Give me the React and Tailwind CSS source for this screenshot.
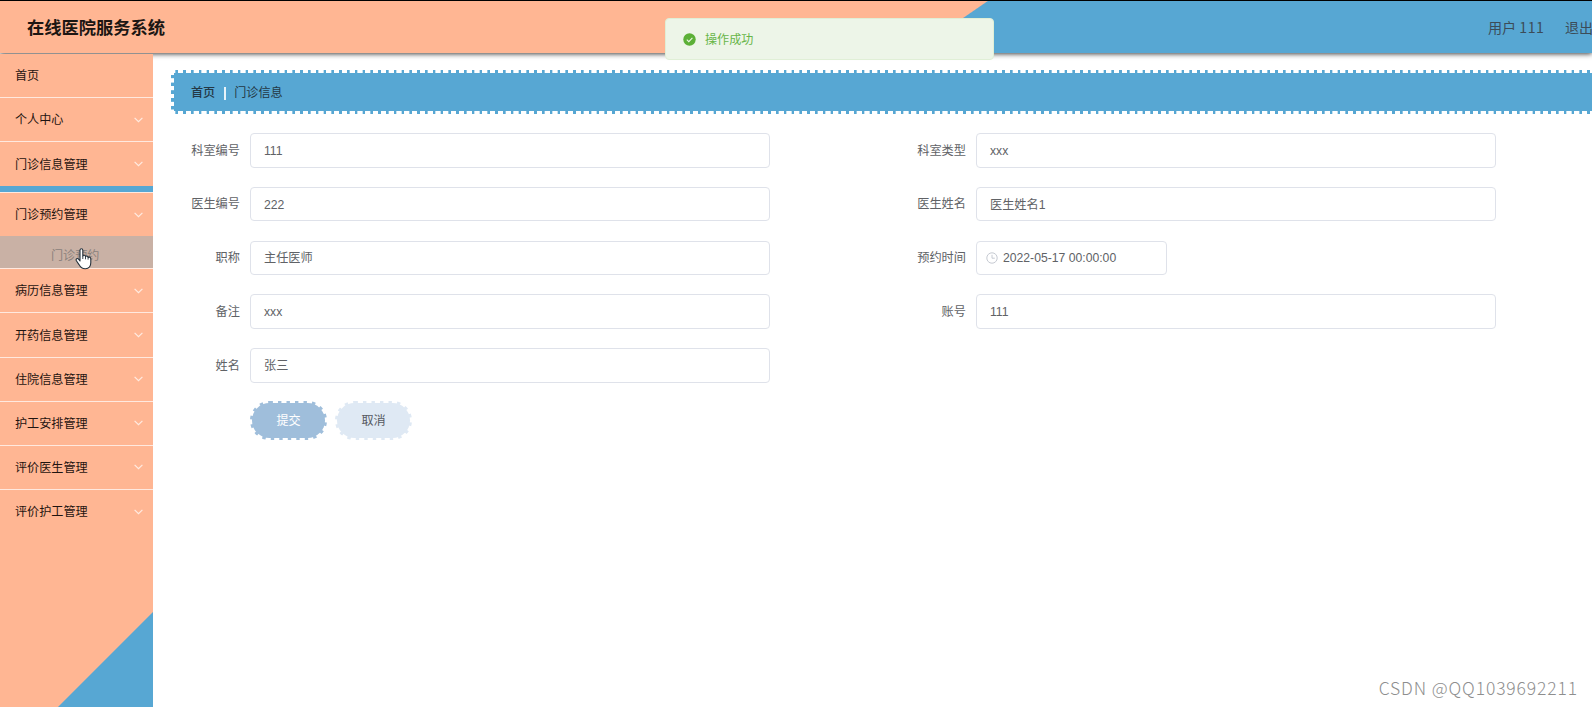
import { clsx } from 'clsx';

const menu = [
  { label: '首页' },
  { label: '个人中心', arrow: true },
  { label: '门诊信息管理', arrow: true, active: true },
  { label: '门诊预约管理', arrow: true, children: ['门诊预约'] },
  { label: '病历信息管理', arrow: true },
  { label: '开药信息管理', arrow: true },
  { label: '住院信息管理', arrow: true },
  { label: '护工安排管理', arrow: true },
  { label: '评价医生管理', arrow: true },
  { label: '评价护工管理', arrow: true },
];

const fields = [
  { label: '科室编号', value: '111' },
  { label: '科室类型', value: 'xxx' },
  { label: '医生编号', value: '222' },
  { label: '医生姓名', value: '医生姓名1' },
  { label: '职称', value: '主任医师' },
  { label: '预约时间', value: '2022-05-17 00:00:00', date: true },
  { label: '备注', value: 'xxx' },
  { label: '账号', value: '111' },
  { label: '姓名', value: '张三' },
];

function ArrowDown() {
  return (
    <svg className="w-[9px] h-[6px]" viewBox="0 0 9 6" fill="none" stroke="#ffebe1" strokeWidth="1.2">
      <path d="M0.6 0.8 4.5 4.7 8.4 0.8" />
    </svg>
  );
}

function Clock() {
  return (
    <svg className="w-[12px] h-[12px]" viewBox="0 0 12 12" fill="none" stroke="#c6cad2" strokeWidth="1">
      <circle cx="6" cy="6" r="5.2" />
      <path d="M6 2.8V6.2H8.8" />
    </svg>
  );
}

function HandCursor() {
  return (
    <svg className="absolute left-[75px] top-[12px] w-[17px] h-[22px]" viewBox="0 0 17 22" fill="#fff" stroke="#26323c" strokeWidth="1.1" strokeLinejoin="round">
      <path d="M5 13V2.2C5 .3 7.8.3 7.8 2.2V8C8.2 6.8 10.5 7 10.5 8.6 11.2 7.6 13.1 8 13.1 9.5 14 8.7 15.8 9.2 15.8 11V14.5C15.8 17 14.5 20.5 10.5 20.8 6.5 21 5 18.5 4 16.6L1.4 12.8C.4 11 2.4 9.8 3.6 11.2Z" />
      <path d="M7.8 8V11M10.5 8.6V11.3M13.1 9.5V11.6" strokeWidth="0.9" />
    </svg>
  );
}

function Header() {
  return (
    <header className="relative z-10 h-[53px] shrink-0 border-t border-black bg-[linear-gradient(145.5deg,#ffb693_559px,#57a7d3_560px)] shadow-[0_1px_5px_rgba(0,0,0,0.75)] flex items-center justify-between pl-[27px]">
      <h1 className="pt-[4px] text-[17.25px] font-bold text-[#1c1613] whitespace-nowrap">在线医院服务系统</h1>
      <div className="w-[104px] pt-px flex gap-[22px] text-[14.1px] text-[#3c4c58] whitespace-nowrap overflow-hidden font-['Noto_Sans_CJK_SC',sans-serif]">
        <span className="w-[55px] shrink-0">用户 <span className="tracking-[0.5px]">111</span></span>
        <span className="shrink-0">退出</span>
      </div>
      <div className="absolute left-[665px] top-[17px] w-[329px] h-[42px] rounded-[4px] border border-[#e0efd6] bg-[#edf5e8] flex items-center gap-[9px] pl-[17px]">
        <svg className="w-[13px] h-[13px]" viewBox="0 0 13 13">
          <circle cx="6.5" cy="6.5" r="6.2" fill="#5cb037" />
          <path d="M3.8 6.6 5.8 8.6 9.4 4.9" fill="none" stroke="#edf5e8" strokeWidth="1.1" />
        </svg>
        <span className="pt-[2px] text-[12.1px] text-[#68b648]">操作成功</span>
      </div>
    </header>
  );
}

function Sidebar() {
  return (
    <aside className="w-[153.4px] shrink-0 relative z-10 mt-px bg-[linear-gradient(315deg,#57a7d3_66.8px,#ffb693_67.6px)] text-[12.1px] text-[#1f1410]">
      {menu.map((item, i) => (
        <div
          key={item.label}
          className={clsx(i < menu.length - 1 && 'border-b border-[#ffe9df]')}
        >
          <div className="h-[43.2px] flex items-center justify-between pl-[15px] pr-[10px]">
            <span className="pt-[1.5px]">{item.label}</span>
            {item.arrow && <ArrowDown />}
          </div>
          {item.active && <div className="h-[6.4px] bg-[#57a7d3]" />}
          {item.children?.map((child) => (
            <div key={child} className="relative h-[32px] bg-[#c9b1a5] text-[#8b817c] flex items-center pt-[7px] pl-[51px]">
              {child}
              <HandCursor />
            </div>
          ))}
        </div>
      ))}
    </aside>
  );
}

function Breadcrumb() {
  return (
    <div className="flex h-[44px]">
      <div className="w-[3px] mt-[5px] mb-[3px] bg-[repeating-linear-gradient(180deg,#57a7d3_0_3px,#fff_3.6px_7.3px,#57a7d3_7.8px)]" />
      <div className="flex-1 flex flex-col">
        <div className="h-[3px] bg-[repeating-linear-gradient(90deg,#fff_0_1.1px,#57a7d3_1.7px_3.7px,#fff_4.3px_7.8px)]" />
        <div className="flex-1 bg-[#57a7d3] flex items-center pl-[17px] pt-[2px] text-[12.1px] text-[#243845]">
          <span className="font-medium">首页</span>
          <span className="w-[2px] h-[13px] ml-[9px] mr-[8px] bg-[#e8f3f9]" />
          <span>门诊信息</span>
        </div>
        <div className="h-[3px] bg-[repeating-linear-gradient(90deg,#fff_0_1.1px,#57a7d3_1.7px_3.7px,#fff_4.3px_7.8px)]" />
      </div>
    </div>
  );
}

function Field({ label, value, date }) {
  return (
    <div className="flex items-center gap-[10px] h-[34.5px] text-[12.2px] text-[#606266]">
      <label className="w-[69px] pt-px text-right">{label}</label>
      <div
        className={clsx(
          'h-full border border-[#dfe2ea] rounded-[4px] bg-white flex items-center',
          date ? 'w-[191px] pl-[9px] gap-[5px]' : 'w-[520px] pl-[13px]'
        )}
      >
        {date && <Clock />}
        <span className="pt-[1.5px]">{value}</span>
      </div>
    </div>
  );
}

function StampButton({ className, children }) {
  return (
    <button className={clsx('relative w-[77px] h-[39px] p-[2px]', className)}>
      <svg className="absolute inset-0 w-full h-full" viewBox="0 0 77 39" fill="none" stroke="currentColor">
        <rect x="2" y="2" width="73" height="35" rx="17.5" fill="currentColor" stroke="none" />
        <rect x="1.5" y="1.5" width="74" height="36" rx="18" strokeWidth="3" strokeDasharray="3.4 5.1" />
      </svg>
      {children}
    </button>
  );
}

export default function App() {
  return (
    <div className="relative w-[1592px] h-[707px] overflow-hidden bg-white flex flex-col font-['Liberation_Sans','Noto_Sans_CJK_SC',sans-serif]">
      <Header />
      <div className="flex-1 flex">
        <Sidebar />
        <main className="flex-1 pl-[17.6px] pt-[17px]">
          <Breadcrumb />
          <div className="grid grid-cols-[726px_auto] gap-y-[19.3px] pt-[19px]">
            {fields.map((f) => (
              <Field key={f.label} {...f} />
            ))}
          </div>
          <div className="flex gap-[8px] pl-[79px] pt-[18.6px] text-[12.1px]">
            <StampButton className="text-[#9fbedb]">
              <span className="relative text-white">提交</span>
            </StampButton>
            <StampButton className="text-[#dfe9f4]">
              <span className="relative text-[#55585e]">取消</span>
            </StampButton>
          </div>
        </main>
      </div>
      <div className="absolute right-[14px] bottom-[6px] text-[17.5px] tracking-[0.87px] font-light text-[#8e8e8e] whitespace-nowrap font-['Noto_Sans_CJK_SC',sans-serif]">
        CSDN @QQ1039692211
      </div>
    </div>
  );
}
